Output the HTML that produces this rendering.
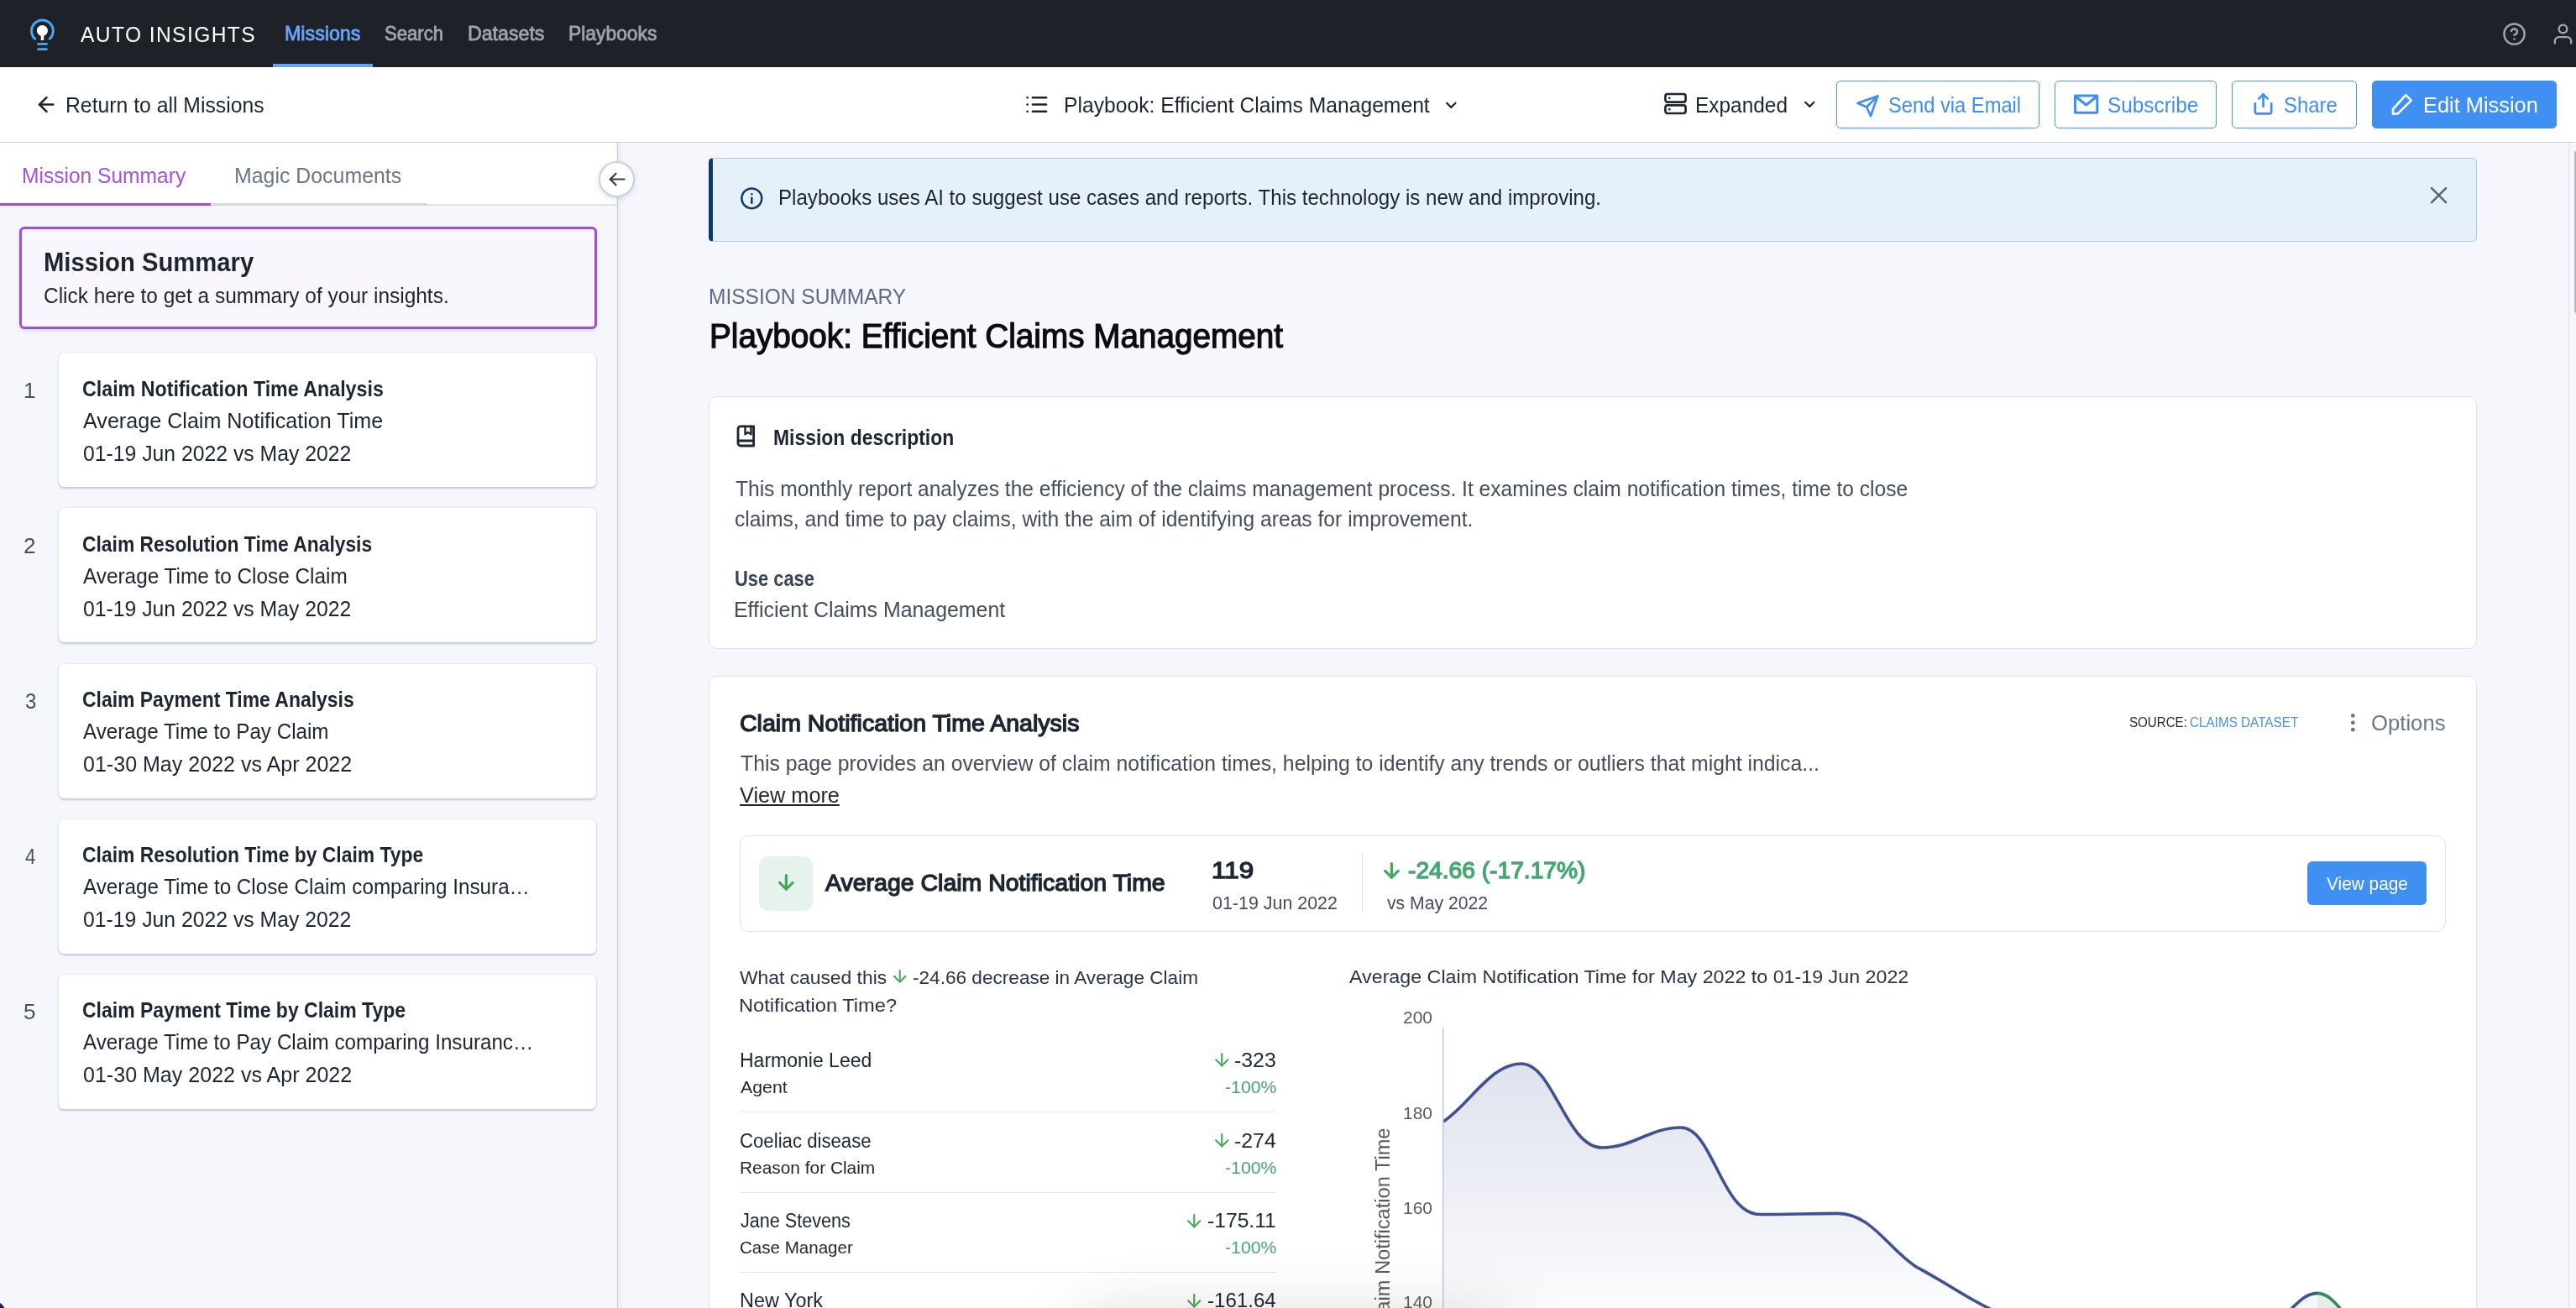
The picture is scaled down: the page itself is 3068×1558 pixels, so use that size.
<!DOCTYPE html>
<html><head><meta charset="utf-8"><title>Auto Insights</title>
<style>
*{box-sizing:border-box;margin:0;padding:0}
html,body{width:3068px;height:1558px;overflow:hidden;background:#f6f7fc;font-family:"Liberation Sans",sans-serif;}
#root{will-change:transform;position:relative;width:3068px;height:1558px;overflow:hidden;background:#f6f7fc}
.a{position:absolute}
.t{position:absolute;white-space:pre;transform-origin:0 0;display:block}
svg{position:absolute;overflow:visible}
.ic{fill:none;stroke-linecap:round;stroke-linejoin:round}
.card{position:absolute;background:#fff;border-radius:6px;box-shadow:0 1.5px 2.5px rgba(60,80,120,.26),0 0 2px rgba(60,80,120,.16)}
.btn{position:absolute;top:96px;height:57px;border:1.5px solid #4b93ee;border-radius:5px;background:#fff}
</style></head><body><div id="root">

<!-- NAVBAR -->
<div class="a" style="left:0;top:0;width:3068px;height:80px;background:#1f2128"></div>
<div class="a" style="left:325px;top:76.2px;width:119px;height:3.4px;background:#62a4f5"></div>
<svg style="left:30px;top:16px" width="44" height="50" viewBox="30 16 44 50">
  <path d="M42.6 47.1 A12.9 12.9 0 1 1 58.2 47.1" fill="none" stroke="#45a6fb" stroke-width="3"/>
  <circle cx="50.4" cy="36.4" r="6.5" fill="#fff"/>
  <rect x="48.7" y="40" width="3.5" height="8" fill="#fff"/>
  <rect x="44.1" y="51" width="12.7" height="2.8" rx="1.2" fill="#45a6fb"/>
  <rect x="44.1" y="57.2" width="12.7" height="2.8" rx="1.2" fill="#45a6fb"/>
</svg>
<!-- help + user -->
<svg class="ic" style="left:2979.8px;top:25.5px" width="29" height="29" viewBox="0 0 24 24" stroke="#a2a6b2" stroke-width="2"><circle cx="12" cy="12" r="10"/><path d="M9.09 9a3 3 0 0 1 5.83 1c0 2-3 3-3 3"/><line x1="12" y1="17" x2="12.01" y2="17"/></svg>
<svg class="ic" style="left:3037.9px;top:26px" width="29" height="29" viewBox="0 0 24 24" stroke="#a2a6b2" stroke-width="2"><path d="M20 21v-2a4 4 0 0 0-4-4H8a4 4 0 0 0-4 4v2"/><circle cx="12" cy="7" r="4"/></svg>

<!-- TOOLBAR -->
<div class="a" style="left:0;top:80px;width:3068px;height:90px;background:#fff;border-bottom:1.5px solid #cbd2db"></div>
<svg class="ic" style="left:41.3px;top:109.5px" width="29" height="29" viewBox="0 0 24 24" stroke="#1e2532" stroke-width="2.1"><line x1="18.4" y1="12" x2="5" y2="12"/><polyline points="12 19 5 12 12 5"/></svg>
<!-- list icon -->
<svg class="ic" style="left:1219px;top:110px" width="30" height="30" viewBox="0 0 30 30" stroke="#1e2532" stroke-width="2.6"><line x1="11" y1="6.2" x2="27" y2="6.2"/><line x1="11" y1="14.5" x2="27" y2="14.5"/><line x1="11" y1="22.8" x2="27" y2="22.8"/><line x1="4.6" y1="6.2" x2="4.7" y2="6.2"/><line x1="4.6" y1="14.5" x2="4.7" y2="14.5"/><line x1="4.6" y1="22.8" x2="4.7" y2="22.8"/></svg>
<svg class="ic" style="left:1718.2px;top:114.7px" width="20.6" height="20.6" viewBox="0 0 24 24" stroke="#1e2532" stroke-width="2.5"><polyline points="6 9 12 15 18 9"/></svg>
<!-- expanded (server) icon -->
<svg class="ic" style="left:1980.5px;top:109.3px" width="29" height="29" viewBox="0 0 24 24" stroke="#1e2532" stroke-width="2.2"><rect x="2" y="2.5" width="20" height="8" rx="2.2"/><rect x="2" y="13.5" width="20" height="8" rx="2.2"/><line x1="6" y1="6.5" x2="6.01" y2="6.5"/><line x1="6" y1="17.5" x2="6.01" y2="17.5"/></svg>
<svg class="ic" style="left:2144.6px;top:114.4px" width="20.6" height="20.6" viewBox="0 0 24 24" stroke="#1e2532" stroke-width="2.5"><polyline points="6 9 12 15 18 9"/></svg>
<!-- buttons -->
<div class="btn" style="left:2187px;width:242px"></div>
<div class="btn" style="left:2447px;width:193px"></div>
<div class="btn" style="left:2658px;width:149px"></div>
<div class="btn" style="left:2825px;width:220px;background:#4090f4;border-color:#4090f4"></div>
<svg class="ic" style="left:2209.8px;top:112.4px" width="28.7" height="28.7" viewBox="0 0 24 24" stroke="#3f8ef3" stroke-width="2.2"><line x1="22" y1="2" x2="11" y2="13"/><polygon points="22 2 15 22 11 13 2 9 22 2"/></svg>
<svg class="ic" style="left:2468px;top:110px" width="33" height="28" viewBox="0 0 33 28" stroke="#3f8ef3" stroke-width="3" stroke-linejoin="miter"><rect x="3.4" y="4" width="26.4" height="20.3" rx="0.8"/><polyline points="4 5 16.6 15 29.2 5" stroke-linejoin="round"/></svg>
<svg class="ic" style="left:2681px;top:110.4px" width="29" height="29" viewBox="0 0 24 24" stroke="#3f8ef3" stroke-width="2.2"><path d="M4 11v8a2 2 0 0 0 2 2h12a2 2 0 0 0 2-2v-8"/><polyline points="16.3 6.3 12 2 7.7 6.3"/><line x1="12" y1="2" x2="12" y2="14"/></svg>
<svg class="ic" style="left:2846.3px;top:109px" width="30" height="30" viewBox="0 0 30 30" stroke="#fff" stroke-width="2.6" stroke-linejoin="miter"><path d="M19.3 4.2 L25.7 10.6 L9.8 26.4 L4 26.8 L4 21 Z" stroke-linejoin="round"/></svg>

<!-- SIDEBAR -->
<div class="a" style="left:0;top:170px;width:735px;height:75px;background:#fff;border-bottom:2px solid #dde2e9"></div>
<div class="a" style="left:251px;top:242px;width:257px;height:3px;background:#d3d9e1"></div>
<div class="a" style="left:0;top:242.2px;width:251px;height:2.8px;background:#a04fd2"></div>
<div class="a" style="left:734.5px;top:170px;width:1.2px;height:1388px;background:#c9ced7;box-shadow:1.5px 0 4px rgba(60,70,95,.24)"></div>
<div class="a" style="left:713.4px;top:191.8px;width:43px;height:43px;border-radius:50%;background:#fff;border:2px solid #c9d1dc;box-shadow:0 2px 6px rgba(60,80,120,.18)"></div>
<svg class="ic" style="left:722px;top:201.6px" width="23" height="23" viewBox="0 0 24 24" stroke="#3a3a3a" stroke-width="2.3"><line x1="22.5" y1="12" x2="5" y2="12"/><polyline points="12 19 5 12 12 5"/></svg>

<div class="a" style="left:23px;top:270px;width:687.5px;height:122px;background:#faf6fe;border:3px solid #9f4fd0;border-radius:6px;box-shadow:0 2px 4px rgba(90,70,130,.2)"></div>
<div class="card" style="left:70px;top:420px;width:640px;height:160px"></div>
<div class="card" style="left:70px;top:605.3px;width:640px;height:160px"></div>
<div class="card" style="left:70px;top:790.6px;width:640px;height:160px"></div>
<div class="card" style="left:70px;top:976px;width:640px;height:160px"></div>
<div class="card" style="left:70px;top:1161px;width:640px;height:160px"></div>
<div class="a" style="left:-27.5px;top:1547px;width:36px;height:36px;border-radius:50%;background:#2a1567;border:2px solid #fff"></div>

<!-- MAIN -->
<div class="a" style="left:844px;top:188px;width:2105.5px;height:99.7px;background:#e6f0fa;border:1px solid #a9cbf0;border-left:5px solid #0d3870;border-radius:5px"></div>
<svg class="ic" style="left:881.1px;top:222px" width="28.6" height="28.6" viewBox="0 0 24 24" stroke="#0d3870" stroke-width="2.1"><circle cx="12" cy="12" r="10"/><line x1="12" y1="16.5" x2="12" y2="11.5"/><line x1="12" y1="7.8" x2="12.01" y2="7.8"/></svg>
<svg class="ic" style="left:2890.6px;top:218.8px" width="27.2" height="27.2" viewBox="0 0 24 24" stroke="#5b6472" stroke-width="2.3"><line x1="19.5" y1="4.5" x2="4.5" y2="19.5"/><line x1="4.5" y1="4.5" x2="19.5" y2="19.5"/></svg>

<div class="a" style="left:844px;top:471.5px;width:2105.5px;height:301.6px;background:#fff;border:1.5px solid #dde2ee;border-radius:10px"></div>
<svg class="ic" style="left:874px;top:503px" width="30" height="32" viewBox="874 503 30 32" stroke="#1e2532" stroke-width="2.8"><path d="M897.6 507.8 H882 a3 3 0 0 0 -3 3 V528 a3 3 0 0 0 3 3 H897.6 Z"/><line x1="879" y1="525" x2="897.6" y2="525"/><polyline points="887.5 508 887.5 517.2 891 515 894.5 517.2 894.5 508" stroke-width="2.4"/></svg>

<div class="a" style="left:844px;top:805px;width:2105.5px;height:800px;background:#fff;border:1.5px solid #dde2ee;border-radius:10px"></div>
<svg style="left:2796px;top:846px" width="12" height="30" viewBox="2796 846 12 30"><circle cx="2802.3" cy="852.4" r="2.4" fill="#6c7689"/><circle cx="2802.3" cy="860.8" r="2.4" fill="#6c7689"/><circle cx="2802.3" cy="869.2" r="2.4" fill="#6c7689"/></svg>

<!-- KPI box -->
<div class="a" style="left:881px;top:995px;width:2031.5px;height:114.5px;background:#fff;border:1.5px solid #dde2ee;border-radius:11px"></div>
<div class="a" style="left:904px;top:1020px;width:64px;height:65px;background:#e6f3ed;border-radius:11px"></div>
<svg class="ic" style="left:922.6px;top:1038.4px" width="26.8" height="26.8" viewBox="0 0 24 24" stroke="#45a85c" stroke-width="2.9"><line x1="12" y1="4.2" x2="12" y2="19"/><polyline points="19 12 12 19 5 12"/></svg>
<div class="a" style="left:1621.5px;top:1017px;width:1.5px;height:70px;background:#d9dee8"></div>
<svg class="ic" style="left:1644.3px;top:1024px" width="26.8" height="26.8" viewBox="0 0 24 24" stroke="#45a85c" stroke-width="2.9"><line x1="12" y1="4.2" x2="12" y2="19"/><polyline points="19 12 12 19 5 12"/></svg>
<div class="a" style="left:2748px;top:1026px;width:142px;height:52px;background:#4090f4;border-radius:6px"></div>

<!-- what caused arrow -->
<svg class="ic" style="left:1060.25px;top:1151.25px" width="23.50" height="23.50" viewBox="0 0 24 24" stroke="#3fa557" stroke-width="2.00"><line x1="12" y1="5" x2="12" y2="19"/><polyline points="19 12 12 19 5 12"/></svg>
<svg class="ic" style="left:1442.75px;top:1250.25px" width="24.50" height="24.50" viewBox="0 0 24 24" stroke="#3fa557" stroke-width="2.00"><line x1="12" y1="5" x2="12" y2="19"/><polyline points="19 12 12 19 5 12"/></svg><svg class="ic" style="left:1442.75px;top:1346.25px" width="24.50" height="24.50" viewBox="0 0 24 24" stroke="#3fa557" stroke-width="2.00"><line x1="12" y1="5" x2="12" y2="19"/><polyline points="19 12 12 19 5 12"/></svg><svg class="ic" style="left:1410.25px;top:1441.75px" width="24.50" height="24.50" viewBox="0 0 24 24" stroke="#3fa557" stroke-width="2.00"><line x1="12" y1="5" x2="12" y2="19"/><polyline points="19 12 12 19 5 12"/></svg><svg class="ic" style="left:1410.25px;top:1537.25px" width="24.50" height="24.50" viewBox="0 0 24 24" stroke="#3fa557" stroke-width="2.00"><line x1="12" y1="5" x2="12" y2="19"/><polyline points="19 12 12 19 5 12"/></svg>
<div class="a" style="left:881px;top:1324.1px;width:638.5px;height:1.3px;background:#e3e7ef"></div>
<div class="a" style="left:881px;top:1420.1px;width:638.5px;height:1.3px;background:#e3e7ef"></div>
<div class="a" style="left:881px;top:1515.1px;width:638.5px;height:1.3px;background:#e3e7ef"></div>

<!-- CHART -->
<svg style="left:0;top:0" width="3068" height="1558" viewBox="0 0 3068 1558">
  <defs>
    <linearGradient id="g1" x1="0" y1="1260" x2="0" y2="1600" gradientUnits="userSpaceOnUse"><stop offset="0" stop-color="#40529a" stop-opacity=".17"/><stop offset="1" stop-color="#40529a" stop-opacity="0"/></linearGradient>
    <clipPath id="cl"><rect x="1700" y="1200" width="1249" height="358"/></clipPath>
  </defs>
  <g clip-path="url(#cl)">
  <path id="area1" d="M1718.7 1336 C1750 1316 1775 1267 1812 1267 C1850 1267 1865 1367 1908 1367 C1945 1367 1965 1343 2002 1343 C2040 1343 2050 1446.5 2096 1446.5 C2130 1446.5 2155 1445.4 2189 1445.4 C2229 1445.4 2250 1489 2283 1509.5 C2320 1529 2340 1545 2372 1560 L2372 1600 L1718.7 1600 Z" fill="url(#g1)"/>
  <path d="M1718.7 1336 C1750 1316 1775 1267 1812 1267 C1850 1267 1865 1367 1908 1367 C1945 1367 1965 1343 2002 1343 C2040 1343 2050 1446.5 2096 1446.5 C2130 1446.5 2155 1445.4 2189 1445.4 C2229 1445.4 2250 1489 2283 1509.5 C2320 1529 2340 1545 2372 1560" fill="none" stroke="#3e5292" stroke-width="3.6" stroke-linejoin="round"/>
  <path d="M2726 1562 C2738 1550 2746 1541 2760 1540.4 L2760 1562 Z" fill="#40529a" fill-opacity=".05"/>
  <path d="M2760 1540.4 C2772 1541 2780 1550 2790 1562 L2760 1562 Z" fill="#2f8a5c" fill-opacity=".14"/>
  <path d="M2726 1562 C2738 1550 2746 1541 2760 1540.4" fill="none" stroke="#40529a" stroke-width="3.6"/>
  <path d="M2760 1540.4 C2772 1541 2780 1550 2790 1562" fill="none" stroke="#2f8a5c" stroke-width="3.6"/>
  </g>
  <line x1="1718.7" y1="1223.5" x2="1718.7" y2="1558" stroke="#c3c9e4" stroke-width="1.6"/>
  <text transform="translate(1654.5 1343.5) rotate(-90)" text-anchor="end" font-family="Liberation Sans, sans-serif" font-size="23.3" fill="#5a5a5a" textLength="335.5" lengthAdjust="spacingAndGlyphs">Average Claim Notification Time</text>
</svg>

<!-- bottom centre shadow of floating element below viewport -->
<div class="a" style="left:1300px;top:1602px;width:480px;height:60px;border-radius:30px;box-shadow:0 0 80px 36px rgba(0,0,0,.15)"></div>

<!-- scrollbar -->
<div class="a" style="left:3058.5px;top:170px;width:1.5px;height:1388px;background:#dfe2e8"></div>
<div class="a" style="left:3065.6px;top:178.5px;width:10px;height:195px;border-radius:4px;background:#b7bac0"></div>

<span class="t" id="t0" style="left:95.70px;top:27.91px;font-size:26.01px;line-height:26.01px;font-weight:400;color:#ffffff;transform:scaleX(0.9447);letter-spacing:1.50px;">AUTO INSIGHTS</span>
<span class="t" id="t1" style="left:338.52px;top:28.39px;font-size:24.68px;line-height:24.68px;font-weight:400;color:#66a7f7;transform:scaleX(0.9420);-webkit-text-stroke-width:0.85px;">Missions</span>
<span class="t" id="t2" style="left:458.18px;top:28.39px;font-size:24.68px;line-height:24.68px;font-weight:400;color:#9ea3b3;transform:scaleX(0.8965);-webkit-text-stroke-width:0.85px;">Search</span>
<span class="t" id="t3" style="left:556.52px;top:28.39px;font-size:24.68px;line-height:24.68px;font-weight:400;color:#9ea3b3;transform:scaleX(0.9387);-webkit-text-stroke-width:0.85px;">Datasets</span>
<span class="t" id="t4" style="left:676.54px;top:28.39px;font-size:24.68px;line-height:24.68px;font-weight:400;color:#9ea3b3;transform:scaleX(0.9257);-webkit-text-stroke-width:0.85px;">Playbooks</span>
<span class="t" id="t5" style="left:77.52px;top:112.50px;font-size:24.99px;line-height:24.99px;font-weight:400;color:#1e2532;transform:scaleX(0.9905);">Return to all Missions</span>
<span class="t" id="t6" style="left:1266.52px;top:113.40px;font-size:24.99px;line-height:24.99px;font-weight:400;color:#1e2532;transform:scaleX(0.9877);">Playbook: Efficient Claims Management</span>
<span class="t" id="t7" style="left:2019.44px;top:113.40px;font-size:24.99px;line-height:24.99px;font-weight:400;color:#1e2532;transform:scaleX(0.9778);">Expanded</span>
<span class="t" id="t8" style="left:2249.05px;top:113.00px;font-size:24.99px;line-height:24.99px;font-weight:400;color:#3f8ef3;transform:scaleX(0.9489);">Send via Email</span>
<span class="t" id="t9" style="left:2509.72px;top:113.00px;font-size:24.99px;line-height:24.99px;font-weight:400;color:#3f8ef3;transform:scaleX(0.9752);">Subscribe</span>
<span class="t" id="t10" style="left:2720.04px;top:113.00px;font-size:24.99px;line-height:24.99px;font-weight:400;color:#3f8ef3;transform:scaleX(0.9572);">Share</span>
<span class="t" id="t11" style="left:2885.87px;top:113.00px;font-size:24.99px;line-height:24.99px;font-weight:400;color:#ffffff;transform:scaleX(1.0160);">Edit Mission</span>
<span class="t" id="t12" style="left:25.83px;top:196.81px;font-size:24.99px;line-height:24.99px;font-weight:400;color:#a553d6;transform:scaleX(0.9831);">Mission Summary</span>
<span class="t" id="t13" style="left:278.91px;top:196.81px;font-size:24.99px;line-height:24.99px;font-weight:400;color:#6b7587;transform:scaleX(0.9962);">Magic Documents</span>
<span class="t" id="t14" style="left:51.58px;top:296.01px;font-size:32.13px;line-height:32.13px;font-weight:700;color:#1e2532;transform:scaleX(0.9100);">Mission Summary</span>
<span class="t" id="t15" style="left:52.22px;top:339.90px;font-size:24.99px;line-height:24.99px;font-weight:400;color:#1e2532;transform:scaleX(0.9792);">Click here to get a summary of your insights.</span>
<span class="t" id="t16" style="left:28.46px;top:452.81px;font-size:24.99px;line-height:24.99px;font-weight:400;color:#475063;transform:scaleX(1.0417);">1</span>
<span class="t" id="t17" style="left:97.67px;top:450.50px;font-size:24.99px;line-height:24.99px;font-weight:700;color:#1e2532;transform:scaleX(0.9296);">Claim Notification Time Analysis</span>
<span class="t" id="t18" style="left:98.60px;top:489.00px;font-size:24.99px;line-height:24.99px;font-weight:400;color:#1e2532;transform:scaleX(1.0060);">Average Claim Notification Time</span>
<span class="t" id="t19" style="left:98.60px;top:527.50px;font-size:24.99px;line-height:24.99px;font-weight:400;color:#1e2532;transform:scaleX(0.9909);">01-19 Jun 2022 vs May 2022</span>
<span class="t" id="t20" style="left:28.46px;top:637.81px;font-size:24.99px;line-height:24.99px;font-weight:400;color:#475063;transform:scaleX(1.0417);">2</span>
<span class="t" id="t21" style="left:97.69px;top:635.50px;font-size:24.99px;line-height:24.99px;font-weight:700;color:#1e2532;transform:scaleX(0.9140);">Claim Resolution Time Analysis</span>
<span class="t" id="t22" style="left:98.60px;top:674.00px;font-size:24.99px;line-height:24.99px;font-weight:400;color:#1e2532;transform:scaleX(0.9742);">Average Time to Close Claim</span>
<span class="t" id="t23" style="left:98.60px;top:712.50px;font-size:24.99px;line-height:24.99px;font-weight:400;color:#1e2532;transform:scaleX(0.9909);">01-19 Jun 2022 vs May 2022</span>
<span class="t" id="t24" style="left:29.50px;top:822.81px;font-size:24.99px;line-height:24.99px;font-weight:400;color:#475063;transform:scaleX(0.9615);">3</span>
<span class="t" id="t25" style="left:97.68px;top:820.50px;font-size:24.99px;line-height:24.99px;font-weight:700;color:#1e2532;transform:scaleX(0.9177);">Claim Payment Time Analysis</span>
<span class="t" id="t26" style="left:98.60px;top:859.00px;font-size:24.99px;line-height:24.99px;font-weight:400;color:#1e2532;transform:scaleX(0.9676);">Average Time to Pay Claim</span>
<span class="t" id="t27" style="left:98.60px;top:897.50px;font-size:24.99px;line-height:24.99px;font-weight:400;color:#1e2532;transform:scaleX(1.0024);">01-30 May 2022 vs Apr 2022</span>
<span class="t" id="t28" style="left:29.50px;top:1007.81px;font-size:24.99px;line-height:24.99px;font-weight:400;color:#475063;transform:scaleX(0.8929);">4</span>
<span class="t" id="t29" style="left:97.68px;top:1005.50px;font-size:24.99px;line-height:24.99px;font-weight:700;color:#1e2532;transform:scaleX(0.9163);">Claim Resolution Time by Claim Type</span>
<span class="t" id="t30" style="left:98.60px;top:1044.00px;font-size:24.99px;line-height:24.99px;font-weight:400;color:#1e2532;transform:scaleX(0.9705);">Average Time to Close Claim comparing Insura…</span>
<span class="t" id="t31" style="left:98.60px;top:1082.50px;font-size:24.99px;line-height:24.99px;font-weight:400;color:#1e2532;transform:scaleX(0.9909);">01-19 Jun 2022 vs May 2022</span>
<span class="t" id="t32" style="left:28.46px;top:1192.81px;font-size:24.99px;line-height:24.99px;font-weight:400;color:#475063;transform:scaleX(1.0417);">5</span>
<span class="t" id="t33" style="left:97.68px;top:1190.50px;font-size:24.99px;line-height:24.99px;font-weight:700;color:#1e2532;transform:scaleX(0.9202);">Claim Payment Time by Claim Type</span>
<span class="t" id="t34" style="left:98.60px;top:1229.00px;font-size:24.99px;line-height:24.99px;font-weight:400;color:#1e2532;transform:scaleX(0.9685);">Average Time to Pay Claim comparing Insuranc…</span>
<span class="t" id="t35" style="left:98.60px;top:1267.50px;font-size:24.99px;line-height:24.99px;font-weight:400;color:#1e2532;transform:scaleX(1.0024);">01-30 May 2022 vs Apr 2022</span>
<span class="t" id="t36" style="left:927.07px;top:222.50px;font-size:24.99px;line-height:24.99px;font-weight:400;color:#1e2532;transform:scaleX(0.9645);">Playbooks uses AI to suggest use cases and reports. This technology is new and improving.</span>
<span class="t" id="t37" style="left:844.34px;top:341.00px;font-size:24.99px;line-height:24.99px;font-weight:400;color:#5d6b8a;transform:scaleX(0.9810);">MISSION SUMMARY</span>
<span class="t" id="t38" style="left:844.52px;top:380.79px;font-size:40.29px;line-height:40.29px;font-weight:400;color:#0b0c10;transform:scaleX(0.9604);-webkit-text-stroke-width:1.25px;">Playbook: Efficient Claims Management</span>
<span class="t" id="t39" style="left:920.78px;top:509.20px;font-size:24.99px;line-height:24.99px;font-weight:700;color:#1e2532;transform:scaleX(0.9172);">Mission description</span>
<span class="t" id="t40" style="left:875.50px;top:570.00px;font-size:24.99px;line-height:24.99px;font-weight:400;color:#454c5d;transform:scaleX(0.9831);">This monthly report analyzes the efficiency of the claims management process. It examines claim notification times, time to close</span>
<span class="t" id="t41" style="left:874.51px;top:606.00px;font-size:24.99px;line-height:24.99px;font-weight:400;color:#454c5d;transform:scaleX(0.9865);">claims, and time to pay claims, with the aim of identifying areas for improvement.</span>
<span class="t" id="t42" style="left:875.02px;top:677.40px;font-size:24.99px;line-height:24.99px;font-weight:700;color:#374357;transform:scaleX(0.8757);">Use case</span>
<span class="t" id="t43" style="left:873.51px;top:714.00px;font-size:24.99px;line-height:24.99px;font-weight:400;color:#454c5d;transform:scaleX(0.9959);">Efficient Claims Management</span>
<span class="t" id="t44" style="left:881.08px;top:847.03px;font-size:28.56px;line-height:28.56px;font-weight:400;color:#1e2532;transform:scaleX(0.9997);-webkit-text-stroke-width:1.35px;">Claim Notification Time Analysis</span>
<span class="t" id="t45" style="left:882.00px;top:897.00px;font-size:24.99px;line-height:24.99px;font-weight:400;color:#454c5d;transform:scaleX(0.9917);">This page provides an overview of claim notification times, helping to identify any trends or outliers that might indica...</span>
<span class="t" id="t46" style="left:881.40px;top:935.00px;font-size:24.99px;line-height:24.99px;font-weight:400;color:#1e2532;transform:scaleX(1.0114);text-decoration:underline;text-underline-offset:2px;text-decoration-thickness:1.5px;">View more</span>
<span class="t" id="t47" style="left:2536.00px;top:852.52px;font-size:15.71px;line-height:15.71px;font-weight:400;color:#1e2532;transform:scaleX(0.9627);">SOURCE:</span>
<span class="t" id="t48" style="left:2607.50px;top:852.52px;font-size:15.71px;line-height:15.71px;font-weight:400;color:#4a90e2;transform:scaleX(0.9722);">CLAIMS DATASET</span>
<span class="t" id="t49" style="left:2823.97px;top:848.50px;font-size:24.99px;line-height:24.99px;font-weight:400;color:#6c7689;transform:scaleX(1.0282);">Options</span>
<span class="t" id="t50" style="left:983.27px;top:1036.84px;font-size:28.56px;line-height:28.56px;font-weight:400;color:#1e2532;transform:scaleX(0.9977);-webkit-text-stroke-width:1.35px;">Average Claim Notification Time</span>
<span class="t" id="t51" style="left:1443.04px;top:1022.34px;font-size:28.56px;line-height:28.56px;font-weight:400;color:#1e2532;transform:scaleX(1.1027);-webkit-text-stroke-width:1.35px;">119</span>
<span class="t" id="t52" style="left:1444.00px;top:1065.81px;font-size:21.42px;line-height:21.42px;font-weight:400;color:#454c5d;transform:scaleX(1.0009);">01-19 Jun 2022</span>
<span class="t" id="t53" style="left:1677.38px;top:1022.34px;font-size:28.56px;line-height:28.56px;font-weight:400;color:#46a871;transform:scaleX(0.9871);-webkit-text-stroke-width:1.35px;">-24.66 (-17.17%)</span>
<span class="t" id="t54" style="left:1651.70px;top:1065.81px;font-size:21.42px;line-height:21.42px;font-weight:400;color:#454c5d;transform:scaleX(0.9887);">vs May 2022</span>
<span class="t" id="t55" style="left:2771.00px;top:1042.71px;font-size:21.42px;line-height:21.42px;font-weight:400;color:#ffffff;transform:scaleX(0.9729);">View page</span>
<span class="t" id="t56" style="left:881.40px;top:1152.70px;font-size:22.85px;line-height:22.85px;font-weight:400;color:#2c3347;transform:scaleX(0.9995);">What caused this</span>
<span class="t" id="t57" style="left:1087.01px;top:1152.70px;font-size:22.85px;line-height:22.85px;font-weight:400;color:#2c3347;transform:scaleX(0.9892);">-24.66 decrease in Average Claim</span>
<span class="t" id="t58" style="left:880.36px;top:1185.61px;font-size:22.85px;line-height:22.85px;font-weight:400;color:#2c3347;transform:scaleX(1.0358);">Notification Time?</span>
<span class="t" id="t59" style="left:1606.50px;top:1152.00px;font-size:22.85px;line-height:22.85px;font-weight:400;color:#2c3347;transform:scaleX(1.0175);">Average Claim Notification Time for May 2022 to 01-19 Jun 2022</span>
<span class="t" id="t60" style="left:880.63px;top:1250.61px;font-size:23.77px;line-height:23.77px;font-weight:400;color:#1e2532;transform:scaleX(0.9677);">Harmonie Leed</span>
<span class="t" id="t61" style="left:881.60px;top:1284.80px;font-size:20.81px;line-height:20.81px;font-weight:400;color:#1e2532;transform:scaleX(1.0244);">Agent</span>
<span class="t" id="t62" style="left:1458.50px;top:1284.80px;font-size:20.81px;line-height:20.81px;font-weight:400;color:#46a871;transform:scaleX(1.0231);">-100%</span>
<span class="t" id="t63" style="left:1469.95px;top:1250.61px;font-size:23.77px;line-height:23.77px;font-weight:400;color:#1e2532;transform:scaleX(1.0469);">-323</span>
<span class="t" id="t64" style="left:880.67px;top:1346.61px;font-size:23.77px;line-height:23.77px;font-weight:400;color:#1e2532;transform:scaleX(0.9336);">Coeliac disease</span>
<span class="t" id="t65" style="left:880.60px;top:1380.80px;font-size:20.81px;line-height:20.81px;font-weight:400;color:#1e2532;transform:scaleX(1.0036);">Reason for Claim</span>
<span class="t" id="t66" style="left:1458.50px;top:1380.80px;font-size:20.81px;line-height:20.81px;font-weight:400;color:#46a871;transform:scaleX(1.0231);">-100%</span>
<span class="t" id="t67" style="left:1469.95px;top:1346.61px;font-size:23.77px;line-height:23.77px;font-weight:400;color:#1e2532;transform:scaleX(1.0469);">-274</span>
<span class="t" id="t68" style="left:881.60px;top:1442.20px;font-size:23.77px;line-height:23.77px;font-weight:400;color:#1e2532;transform:scaleX(0.9088);">Jane Stevens</span>
<span class="t" id="t69" style="left:880.61px;top:1476.40px;font-size:20.81px;line-height:20.81px;font-weight:400;color:#1e2532;transform:scaleX(0.9883);">Case Manager</span>
<span class="t" id="t70" style="left:1458.50px;top:1476.40px;font-size:20.81px;line-height:20.81px;font-weight:400;color:#46a871;transform:scaleX(1.0231);">-100%</span>
<span class="t" id="t71" style="left:1437.96px;top:1442.20px;font-size:23.77px;line-height:23.77px;font-weight:400;color:#1e2532;transform:scaleX(1.0377);">-175.11</span>
<span class="t" id="t72" style="left:880.61px;top:1537.20px;font-size:23.77px;line-height:23.77px;font-weight:400;color:#1e2532;transform:scaleX(0.9851);">New York</span>
<span class="t" id="t73" style="left:1437.99px;top:1537.20px;font-size:23.77px;line-height:23.77px;font-weight:400;color:#1e2532;transform:scaleX(1.0146);">-161.64</span>
<span class="t" id="t74" style="left:1670.55px;top:1203.01px;font-size:19.89px;line-height:19.89px;font-weight:400;color:#5a5a5a;transform:scaleX(1.0527);">200</span>
<span class="t" id="t75" style="left:1670.55px;top:1317.01px;font-size:19.89px;line-height:19.89px;font-weight:400;color:#5a5a5a;transform:scaleX(1.0527);">180</span>
<span class="t" id="t76" style="left:1670.55px;top:1430.31px;font-size:19.89px;line-height:19.89px;font-weight:400;color:#5a5a5a;transform:scaleX(1.0527);">160</span>
<span class="t" id="t77" style="left:1670.55px;top:1541.51px;font-size:19.89px;line-height:19.89px;font-weight:400;color:#5a5a5a;transform:scaleX(1.0527);">140</span>
</div></body></html>
